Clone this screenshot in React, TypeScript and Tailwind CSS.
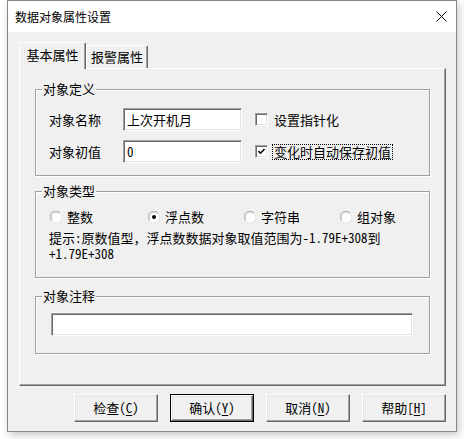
import { ReactNode } from 'react';

// 数据对象属性设置 dialog (classic win32 look)

const raised =
    'border border-t-white border-l-white border-r-[#696969] border-b-[#696969] shadow-[inset_-1px_-1px_0_#a0a0a0,inset_1px_1px_0_#e3e3e3]';
const sunken =
    'border border-t-[#a0a0a0] border-l-[#a0a0a0] border-r-white border-b-white shadow-[inset_1px_1px_0_#696969,inset_-1px_-1px_0_#e3e3e3]';

const GroupBox = ({ title, className, children }: { title: string; className?: string; children?: ReactNode }) => (
    <div className={`relative border border-[#a0a0a0] shadow-[1px_1px_0_#fff,inset_1px_1px_0_#fff] ${className ?? ''}`}>
        <span className="absolute left-[6px] top-[-9px] bg-[#f0f0f0] px-[1px] leading-[16px]">{title}</span>
        {children}
    </div>
);

const Check = ({ checked }: { checked?: boolean }) => (
    <span className={`w-[13px] h-[13px] bg-white flex items-center justify-center ${sunken}`}>
        {checked && (
            <svg width="7" height="7" viewBox="0 0 7 7">
                <path d="M0.5 3 L2.5 5.2 L6.5 1" stroke="#000" strokeWidth="1.6" fill="none" />
            </svg>
        )}
    </span>
);

const Radio = ({ checked }: { checked?: boolean }) => (
    <svg width="12" height="12" viewBox="0 0 12 12" className="shrink-0">
        <circle cx="6" cy="6" r="5.5" fill="#fff" />
        <path d="M10 2 A5.5 5.5 0 0 0 1.5 9.5" stroke="#a0a0a0" strokeWidth="1" fill="none" />
        <path d="M9 3 A4.2 4.2 0 0 0 2.6 8.6" stroke="#d0d0d0" strokeWidth="1" fill="none" />
        <path d="M10.5 2.5 A5.5 5.5 0 0 1 2.5 10.5" stroke="#e3e3e3" strokeWidth="1" fill="none" />
        {checked && <circle cx="6" cy="6" r="2" fill="#000" />}
    </svg>
);

const Btn = ({ label, mn, tail, def }: { label: string; mn: string; tail: [string, string]; def?: boolean }) => (
    <div className={`w-[84px] h-[28px] ${def ? 'border border-black' : ''}`}>
        <div className={`w-full h-full bg-[#f0f0f0] flex items-center justify-center ${raised}`}>
            <span>
                {label}
                {tail[0]}
                <span className="underline underline-offset-2">{mn}</span>
                {tail[1]}
            </span>
        </div>
    </div>
);

const App = () => {
    return (
        <div className="w-[464px] h-[439px] bg-white font-['Noto_Sans_Mono_CJK_SC','Noto_Sans_CJK_SC',sans-serif] text-[13px] text-black">
            <div className="ml-[7px] w-[450px] h-[432px] border border-[#888888] bg-[#f0f0f0] flex flex-col shadow-[2px_3px_8px_rgba(0,0,0,0.22)]">
                {/* title bar */}
                <div className="h-[31px] bg-white flex items-center pl-[7px] pr-[9px] shrink-0">
                    <span className="text-[12px] font-['Noto_Sans_CJK_SC',sans-serif]">数据对象属性设置</span>
                    <svg width="11" height="11" viewBox="0 0 11 11" className="ml-auto">
                        <path d="M0.5 0.5 L10.5 10.5 M10.5 0.5 L0.5 10.5" stroke="#000" strokeWidth="1" />
                    </svg>
                </div>

                {/* tabs */}
                <div className="pl-[11px] pt-[9px] flex items-end h-[36px] shrink-0">
                    <div className="relative z-10 w-[67px] h-[27px] -mb-px bg-[#f0f0f0] border border-b-0 border-t-white border-l-white border-r-[#696969] rounded-t-[2px] shadow-[inset_-1px_0_0_#a0a0a0] flex items-center justify-center pb-[2px]">
                        基本属性
                    </div>
                    <div className="w-[62px] h-[23px] bg-[#f0f0f0] border border-b-0 border-t-white border-l-white border-r-[#696969] rounded-t-[2px] shadow-[inset_-1px_0_0_#a0a0a0] flex items-center justify-center">
                        报警属性
                    </div>
                </div>

                {/* panel */}
                <div className={`ml-[11px] w-[427px] h-[318px] pt-[20px] px-[15px] flex flex-col ${raised} shadow-[inset_-1px_-1px_0_#a0a0a0]`}>
                    <GroupBox title="对象定义" className="h-[87px] pt-[18px] pl-[13px] flex flex-col gap-[9px]">
                        <div className="flex items-center h-[23px]">
                            <span className="w-[74px]">对象名称</span>
                            <div className={`w-[119px] h-[23px] bg-white pl-[3px] flex items-center ${sunken}`}>上次开机月</div>
                            <div className="ml-[13px]"><Check /></div>
                            <span className="ml-[6px]">设置指针化</span>
                        </div>
                        <div className="flex items-center h-[23px]">
                            <span className="w-[74px]">对象初值</span>
                            <div className={`w-[119px] h-[23px] bg-white pl-[3px] flex items-center ${sunken}`}>0</div>
                            <div className="ml-[13px]"><Check checked /></div>
                            <span className="ml-[4px] px-[1px] border border-dotted border-black leading-[14px]">变化时自动保存初值</span>
                        </div>
                    </GroupBox>

                    <GroupBox title="对象类型" className="mt-[15px] h-[87px] pt-[17px]">
                        <div className="flex items-center h-[16px] pl-[14px]">
                            <div className="w-[98px] flex items-center gap-[5px]"><Radio /><span>整数</span></div>
                            <div className="w-[96px] flex items-center gap-[5px]"><Radio checked /><span>浮点数</span></div>
                            <div className="w-[96px] flex items-center gap-[5px]"><Radio /><span>字符串</span></div>
                            <div className="flex items-center gap-[5px]"><Radio /><span>组对象</span></div>
                        </div>
                        <div className="mt-[5px] pl-[13px] leading-[16px]">
                            <div>提示:原数值型，浮点数数据对象取值范围为-1.79E+308到</div>
                            <div>+1.79E+308</div>
                        </div>
                    </GroupBox>

                    <GroupBox title="对象注释" className="mt-[18px] h-[58px] pt-[16px] pl-[15px]">
                        <div className={`w-[362px] h-[23px] bg-white ${sunken}`} />
                    </GroupBox>
                </div>

                {/* buttons */}
                <div className="mt-[8px] ml-[66px] flex gap-[12px]">
                    <Btn label="检查" tail={['(', ')']} mn="C" />
                    <Btn label="确认" tail={['(', ')']} mn="Y" def />
                    <Btn label="取消" tail={['(', ')']} mn="N" />
                    <Btn label="帮助" tail={['[', ']']} mn="H" />
                </div>
            </div>
        </div>
    );
};

export default App;
